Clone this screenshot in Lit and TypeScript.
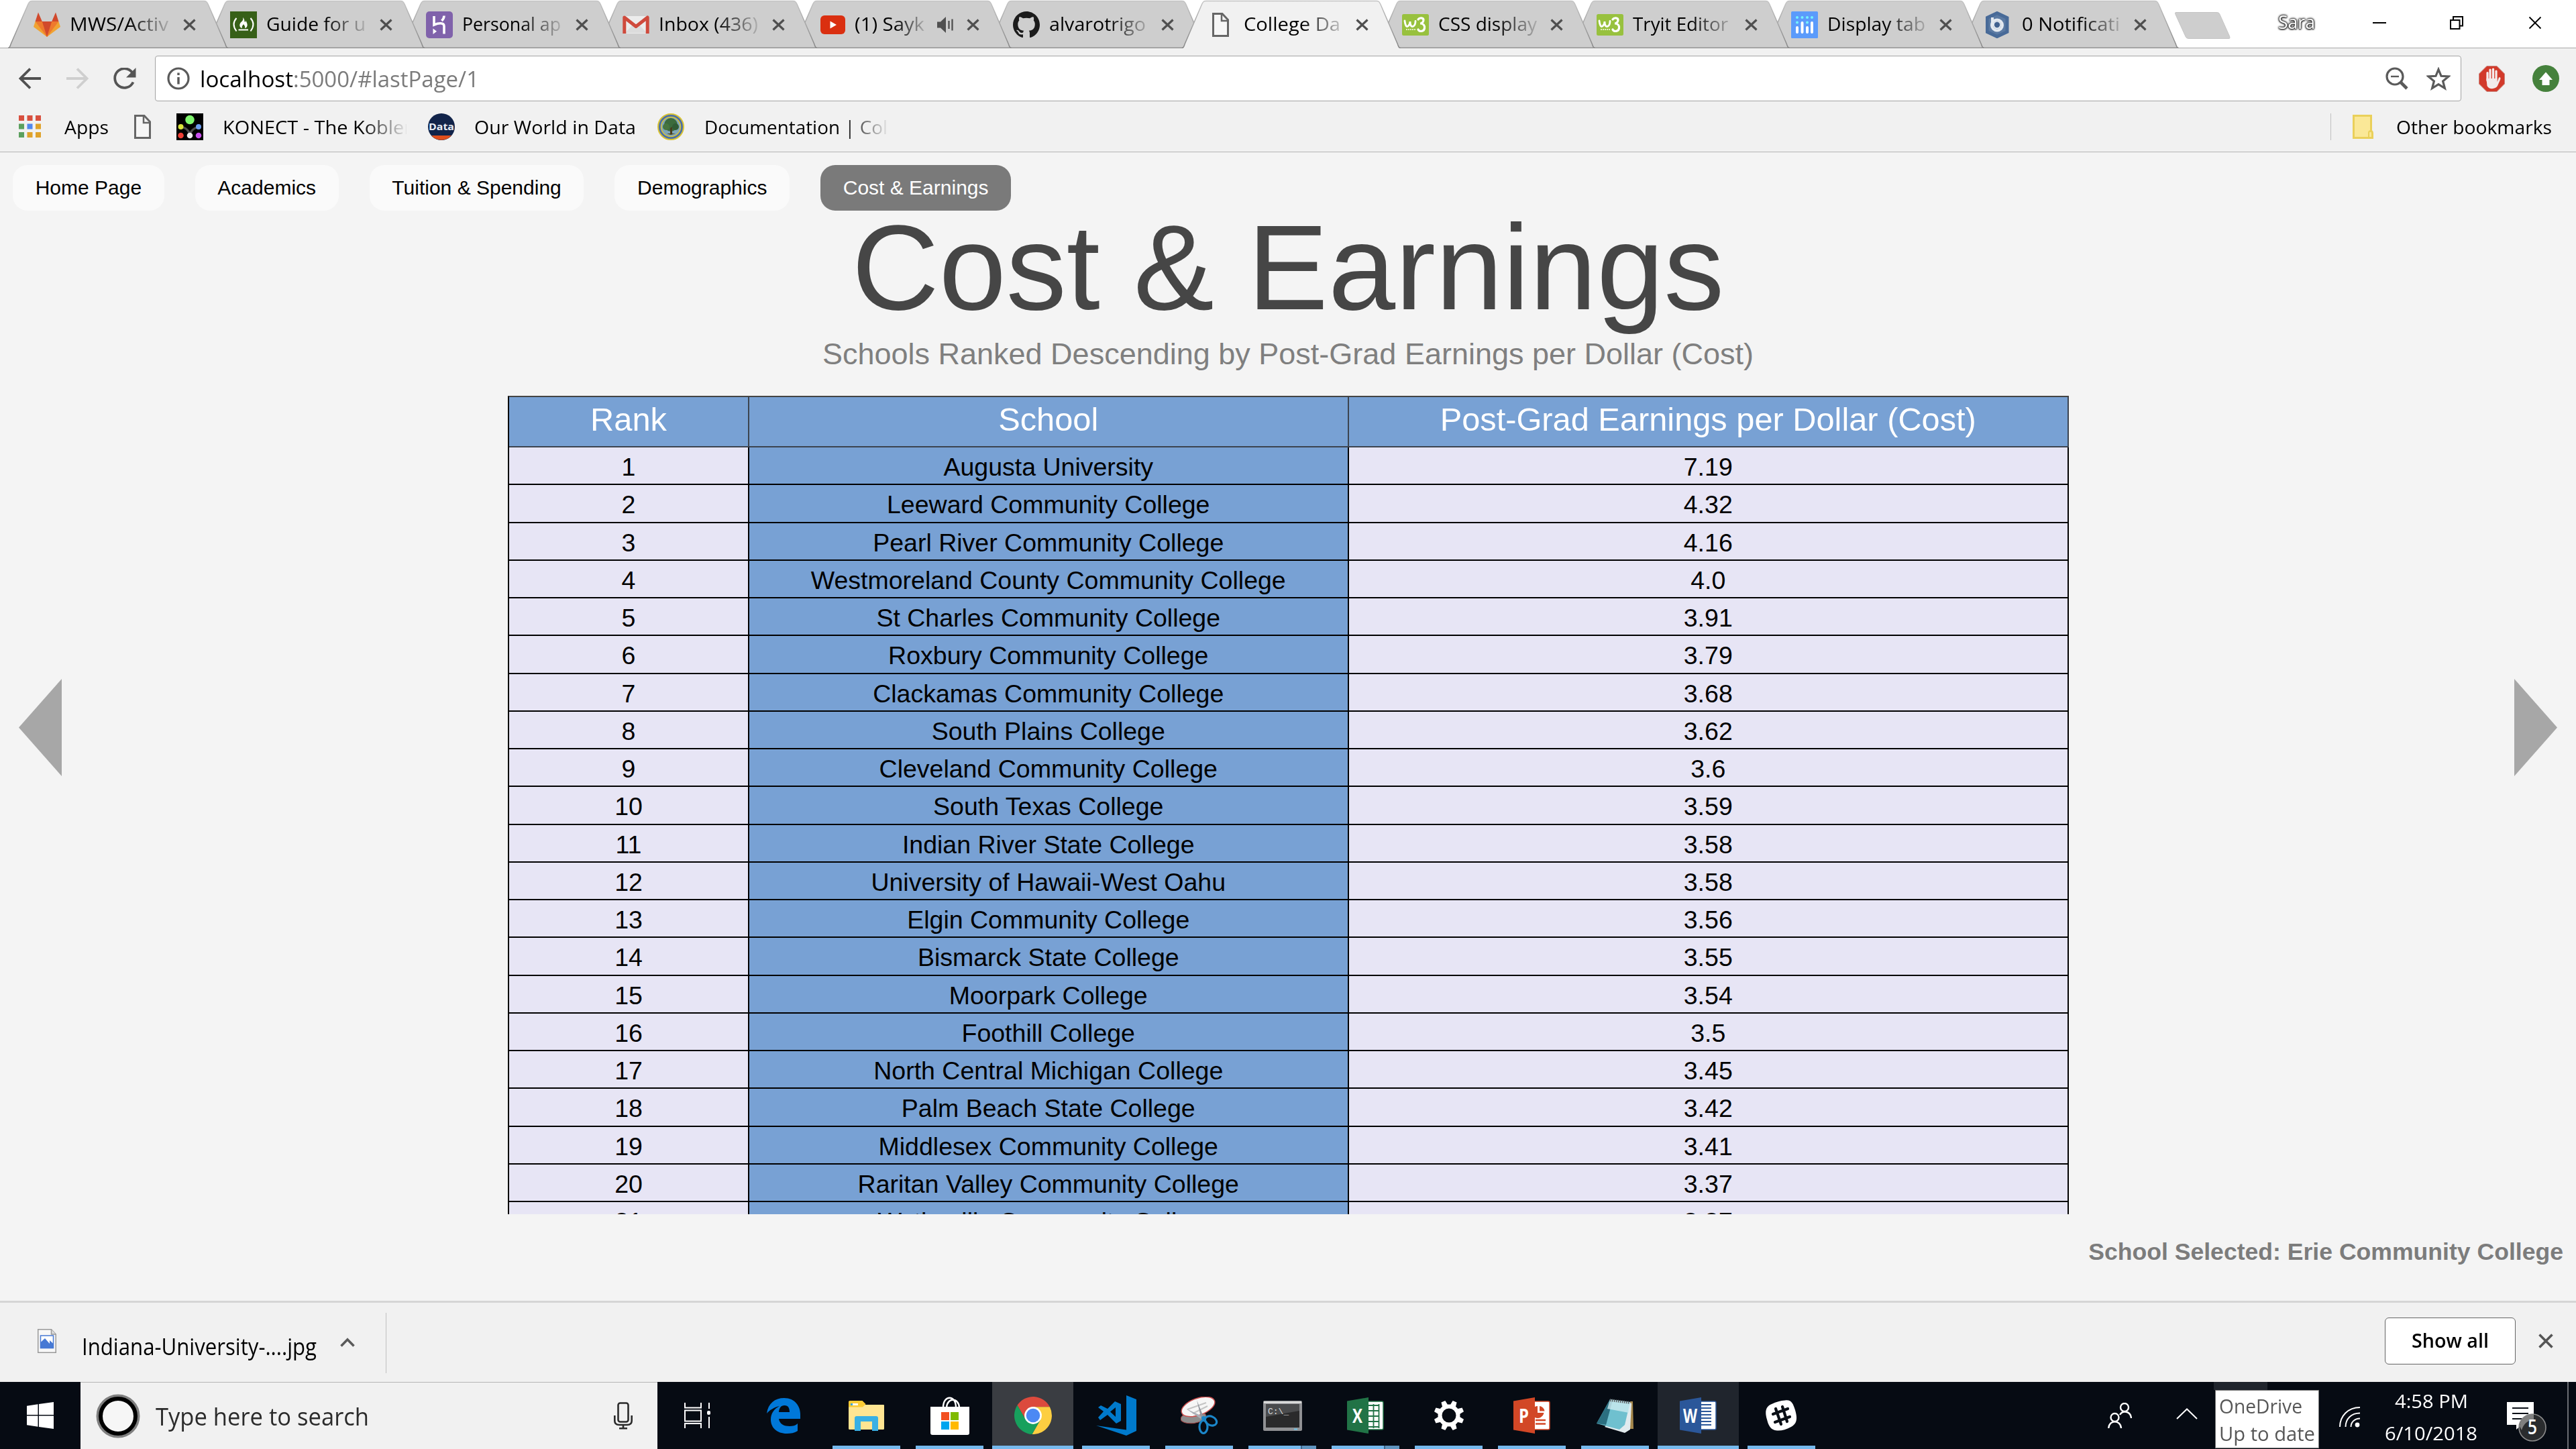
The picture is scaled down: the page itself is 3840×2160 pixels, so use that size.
import { LitElement, html, svg, css, TemplateResult } from "lit";
import { customElement, property } from "lit/decorators.js";
import { classMap } from "lit/directives/class-map.js";
import { styleMap } from "lit/directives/style-map.js";

/** Text set to an exact advance width, condensed or widened as needed. */
@customElement("fit-label")
class FitLabel extends LitElement {
  @property() text = "";
  @property({ type: Number }) w = 100;

  static styles = css`
    :host { display: block; flex: none; overflow: visible; line-height: 1.4; }
    .run { display: inline-block; white-space: pre; transform-origin: 0 50%; }
  `;

  updated() {
    const run = this.renderRoot.querySelector<HTMLElement>(".run")!;
    this.style.width = `${this.w}px`;
    run.style.transform = "none";
    const natural = run.getBoundingClientRect().width;
    if (natural > 0) run.style.transform = `scaleX(${this.w / natural})`;
  }

  render() {
    return html`<span class="run">${this.text}</span>`;
  }
}

const box = (w: number, h: number, body: TemplateResult) =>
  html`<svg width=${w} height=${h} viewBox="0 0 ${w} ${h}" fill="none">${body}</svg>`;

const cross = (w: number, h: number, sw: number, color: string) =>
  box(w, h, svg`<path d="M1.5 1.5L${w - 1.5} ${h - 1.5}M${w - 1.5} 1.5L1.5 ${h - 1.5}" stroke=${color} stroke-width=${sw}/>`);

const pageIcon = box(25, 36, svg`<path d="M1.5 1.5H15L23.5 10.5V34.5H1.5Z" stroke="#666" stroke-width="3" fill="#f6f6f6"/><path d="M14 2V12H24" stroke="#666" stroke-width="2.5"/>`);

const w3Icon = box(40, 40, svg`
  <rect y="4" width="40" height="32" rx="2.5" fill="#98c13e"/>
  <path d="M4 14C5 22 7 23.5 9 22C11 20.500 12 18 12 15C12 21 14 23.500 17 22C19.500 20.500 20 18 20 14.500" stroke="#fff" stroke-width="2.8" stroke-linecap="round"/>
  <path d="M24 12C26 9 32 9 32 13C32 17 28 18 27 18C32 18 34 21 33.500 25C33 30 26 31 24 27" stroke="#fff" stroke-width="3.2" stroke-linecap="round"/>
  <path d="M6 27H20" stroke="#e2f0c2" stroke-width="2" stroke-dasharray="2 1"/>`);

const tabIcons: Record<string, TemplateResult> = {
  gitlab: box(40, 40, svg`
    <path d="M7 1.500L12.800 15H2.600ZM33 1.500L37.400 15H27.200Z" fill="#d1492c"/>
    <path d="M20 38L0 23L2.600 15H37.400L40 23Z" fill="#f0a332"/>
    <path d="M20 38L2.600 15H37.400Z" fill="#ee7a2d"/>
    <path d="M20 38L12.800 15H27.200Z" fill="#d1492c"/>`),
  fcc: box(40, 40, svg`
    <rect width="40" height="40" fill="#376018"/>
    <path d="M9.500 10Q1.500 19 9.500 29.500M30.500 10Q38.500 19 30.500 29.500" stroke="#fff" stroke-width="2"/>
    <path d="M19 9C22 12 21 14 22 16C23.500 15.500 23 14 23 13.500C26.500 18 27 24 22 25C23 22 21 21 20 19C19 21 17 22 18 25C13 24 13.500 18 17 15.500C19 13.500 20 12 19 9Z" fill="#fff"/>
    <path d="M12.500 27.500H27" stroke="#fff" stroke-width="2"/>`),
  heroku: box(40, 40, svg`
    <rect width="40" height="40" rx="5" fill="#8062ab"/>
    <path d="M12 7V20C18 17.500 27 16 27 22V33.500M27 6.500C27 10 25.500 12 23.500 14" stroke="#fff" stroke-width="3.6"/>
    <path d="M10.500 25.500L16 29.800L10.500 34Z" fill="#fff"/>`),
  gmail: box(40, 40, svg`
    <rect x="1" y="7" width="38" height="26" rx="2" fill="#ececec"/>
    <path d="M4 32L16 19L20 22L24 19L36 32Z" fill="#dcdcdc"/>
    <path d="M2.800 33V9L20 22.500L37.200 9V33" stroke="#cf4a3c" stroke-width="5" stroke-linejoin="round"/>`),
  youtube: box(40, 40, svg`
    <rect x="3" y="6" width="37" height="28" rx="6" fill="#da2f10"/>
    <path d="M17.500 14.500L27 20L17.500 25.500Z" fill="#fff"/>`),
  github: html`<svg width="40" height="40" viewBox="0 0 16 16"><path fill="#1b1b1b" d="M8 0C3.580 0 0 3.580 0 8c0 3.540 2.290 6.530 5.470 7.590.4.070.55-.17.55-.38 0-.19-.01-.82-.01-1.490-2.010.37-2.530-.49-2.690-.94-.09-.23-.48-.94-.82-1.130-.28-.15-.68-.52-.01-.53.63-.01 1.080.58 1.230.82.72 1.210 1.870.87 2.330.66.070-.52.28-.87.51-1.070-1.780-.2-3.640-.89-3.640-3.950 0-.87.31-1.590.82-2.150-.08-.2-.36-1.020.08-2.120 0 0 .67-.21 2.200.82.64-.18 1.320-.27 2-.27s1.360.09 2 .27c1.530-1.040 2.200-.82 2.200-.82.44 1.100.16 1.920.08 2.120.51.56.82 1.270.82 2.150 0 3.070-1.870 3.750-3.650 3.950.29.25.54.73.54 1.480 0 1.070-.01 1.930-.01 2.200 0 .21.15.46.55.38A8.010 8.010 0 0 0 16 8c0-4.420-3.580-8-8-8z"/></svg>`,
  page: box(40, 40, svg`<g transform="translate(7 2)"><path d="M1.500 1.500H15L23.500 10.500V34.500H1.500Z" stroke="#666" stroke-width="3" fill="#f6f6f6"/><path d="M14 2V12H24" stroke="#666" stroke-width="2.500"/></g>`),
  w3: w3Icon,
  bars: box(40, 40, svg`
    <rect width="40" height="40" rx="1.500" fill="#5b9bfb"/>
    <path d="M9 9V9.100M16.500 9V9.100M24 9V9.100M31 9V9.100M9 16.500V16.600M24 16.500V16.600" stroke="#74f3fb" stroke-width="4" stroke-linecap="round"/>
    <path d="M9 24V31M16.500 17V31M24 24V31M31 17V31" stroke="#fff" stroke-width="4" stroke-linecap="round"/>`),
  hex: box(40, 40, svg`
    <path d="M17 2.500L32 9.500V30.500L17 37.500L2 30.500V9.500Z" stroke="#486a98" stroke-width="5" fill="#5b7aa3"/>
    <circle cx="17" cy="20.500" r="8" fill="#41618f" stroke="#e3e9f0" stroke-width="4"/><path d="M10 9V21" stroke="#e3e9f0" stroke-width="4"/>
    <circle cx="17" cy="20.500" r="6" fill="#e3e9f0"/><circle cx="17" cy="20" r="4.200" fill="#41618f"/>`),
};

interface Tab { icon: string; text: string; w: number; pitch: number; active?: boolean; sound?: boolean; }
const tabs: Tab[] = [
  { icon: "gitlab", text: "MWS/Activ", w: 147, pitch: 292.5 },
  { icon: "fcc", text: "Guide for u", w: 148, pitch: 292.5 },
  { icon: "heroku", text: "Personal ap", w: 147, pitch: 292.5 },
  { icon: "gmail", text: "Inbox (436)", w: 148, pitch: 292.5 },
  { icon: "youtube", text: "(1) Sayk", w: 104, pitch: 290, sound: true },
  { icon: "github", text: "alvarotrigo", w: 144, pitch: 290 },
  { icon: "page", text: "College Da", w: 144, pitch: 290, active: true },
  { icon: "w3", text: "CSS display", w: 147, pitch: 290 },
  { icon: "w3", text: "Tryit Editor", w: 142, pitch: 290 },
  { icon: "bars", text: "Display tab", w: 146, pitch: 290 },
  { icon: "hex", text: "0 Notificati", w: 146, pitch: 290 },
];

const speaker = box(26, 24, svg`
  <path d="M0 7.500H5L13 0V24L5 16.500H0Z" fill="#505050"/>
  <path d="M17.500 6V18M22.500 3.500V20.500" stroke="#505050" stroke-width="2.300"/>`);

@customElement("tab-strip")
class TabStrip extends LitElement {
  static styles = css`
    :host {
      display: flex; align-items: stretch; height: 72px; padding-left: 12px; box-sizing: border-box;
      background: linear-gradient(#a8a8a8, #a8a8a8) 0 71px / 100% 1px no-repeat #fff;
      font: 28px "Open Sans", "Noto Sans", sans-serif; color: #000;
    }
    svg { display: block; flex: none; }
    .tab { display: flex; align-items: center; box-sizing: border-box; flex: none; position: relative; height: 72px; padding: 0 0 0 38px; margin-right: -35.5px; }
    .shape { position: absolute; left: 0; top: 0; width: 100%; height: 72px; }
    .icon { position: relative; margin-top: 2px; }
    .title { position: relative; margin-left: 14px; width: 149px; overflow: hidden; flex: none; mask-image: linear-gradient(90deg, #000 58%, transparent 106%); }
    .title.short { width: 105px; }
    .sound { position: relative; margin-left: 18px; margin-top: 2px; width: 26px; }
    .close { position: relative; margin-left: auto; margin-right: 48px; margin-top: 2px; }
    .newtab { margin: 18px 0 0 30px; flex: none; }
    .right { margin-left: auto; display: flex; }
    .who { margin: 13px 0 0; color: #fff; text-shadow: 0 0 3px #333, 0 0 3px #333, 0 0 4px #333, 0 0 2px #333, 0 1px 2px #333; }
    .min { margin: 33px 0 0 86px; width: 20px; height: 2px; background: #000; }
    .restore { margin: 24px 0 0 95px; }
    .x { margin: 24px 51px 0 97px; }
  `;

  private tab(t: Tab, i: number) {
    const fill = t.active ? "#f1f1f1" : "#cecece";
    return html`
      <div class="tab" style=${styleMap({ width: `${t.pitch + 35.5}px`, zIndex: `${t.active ? 50 : 20 - i}` })}>
        <svg class="shape" viewBox="0 0 328 72" preserveAspectRatio="none">
          <defs><linearGradient id="edge" x1="0" y1="0" x2="0" y2="1"><stop offset="0" stop-color="#c4c4c4"/><stop offset="1" stop-color="#868686"/></linearGradient></defs>
          <path d="M0 72C3 71 3 69 4 66L30 6C32 2 33 1.500 36 1.500H292C295 1.500 296 2 298 6L324 66C325 69 325 71 328 72Z" fill=${fill}/>
          ${t.active ? "" : svg`<path d="M2 71.300H326" stroke="#959595" stroke-width="1.400"/>`}
          <path d="M0 71.500C3 71 3 69 4 66L30 6C32 2 33 1.500 36 1.500H292C295 1.500 296 2 298 6L324 66C325 69 325 71 328 71.500" fill="none" stroke="url(#edge)" stroke-width="1.500"/>
        </svg>
        <div class="icon">${tabIcons[t.icon]}</div>
        <div class=${classMap({ title: true, short: !!t.sound })}><fit-label .text=${t.text} .w=${t.w}></fit-label></div>
        ${t.sound ? html`<div class="sound">${speaker}</div>` : ""}
        <div class="close">${cross(19, 18, 3.2, "#4f4f4f")}</div>
      </div>`;
  }

  render() {
    return html`
      ${tabs.map((t, i) => this.tab(t, i))}
      <div class="newtab">${box(83, 40, svg`<path d="M2 .5H62C64.500 .5 66 1 67 3.500L81.500 36C82.500 39 82 39.500 80 39.500H21C18.500 39.500 17 38.500 16 36.500L1 3.500C0 1.500 0 .5 2 .5Z" fill="#cecece" stroke="#c4c4c4"/>`)}</div>
      <div class="right">
        <fit-label class="who" .text=${"Sara"} .w=${55}></fit-label>
        <div class="min"></div>
        <div class="restore">${box(20, 20, svg`<path d="M1 6H14.500V19H1ZM5 6V1H19V14.500H15" stroke="#000" stroke-width="2"/>`)}</div>
        <div class="x">${cross(20, 20, 1.8, "#000")}</div>
      </div>`;
  }
}

@customElement("browser-toolbar")
class BrowserToolbar extends LitElement {
  static styles = css`
    :host { display: block; background: #f1f1f1; font: 28px "Open Sans", "Noto Sans", sans-serif; color: #000; border-bottom: 1px solid #b4b4b4; }
    svg { display: block; flex: none; }
    .nav { display: flex; align-items: center; height: 68px; padding: 11px 25px 0 28px; }
    .fwd { margin-left: 38px; }
    .reload { margin-left: 36px; }
    .omni { display: flex; align-items: center; flex: 1; height: 68px; box-sizing: border-box; margin-left: 28px; border: 1px solid #a3a3a3; border-radius: 4px; background: #fff; padding: 0 15px 0 17px; font-size: 33px; }
    .host { margin: 2px 0 0 15px; }
    .path { margin-top: 2px; color: #7b7b7b; }
    .zoom { margin-left: auto; }
    .star { margin-left: 27px; }
    .block { margin-left: 26px; }
    .up { margin-left: 41px; }
    .marks { display: flex; align-items: center; height: 75px; padding: 0 36px 0 28px; }
    .marks fit-label { padding-top: 2px; }
    .apps { margin-left: 35px; }
    .page { margin-left: 38px; }
    .konect { margin-left: 38px; }
    .fade { margin-left: 29px; width: 274px; overflow: hidden; mask-image: linear-gradient(90deg, #000 75%, transparent 101%); flex: none; }
    .data { margin-left: 32px; }
    .world { margin-left: 29px; }
    .seal { margin-left: 32px; }
    .seal + .fade { margin-left: 30px; }
    .sep { margin-left: auto; width: 1px; height: 40px; background: #c0c0c0; }
    .folder { margin-left: 32px; }
    .other { margin-left: 34px; }
    .word { font: 700 15px "Open Sans", sans-serif; }
  `;

  render() {
    const arrow = (c: string, flip: boolean) => box(33, 32, svg`<path transform=${flip ? "translate(33 0) scale(-1 1)" : ""} d="M33 16H3M17 1.500L2.500 16L17 30.500" stroke=${c} stroke-width="3.800"/>`);
    const cells = ["#d8503f", "#d8503f", "#d8503f", "#5ba05e", "#5288ee", "#dfa32c", "#5ba05e", "#dfa32c", "#dfa32c"];
    return html`
      <div class="nav">
        ${arrow("#505050", false)}
        <div class="fwd">${arrow("#cfcfcf", true)}</div>
        <div class="reload">${box(35, 33, svg`<path d="M30.500 9.500A14.300 14.300 0 1 0 30.500 21.500" stroke="#555" stroke-width="3.800"/><path d="M34.500 0V14.500H20Z" fill="#555"/>`)}</div>
        <div class="omni">
          ${box(34, 34, svg`<circle cx="17" cy="17" r="15" stroke="#5a5a5a" stroke-width="3.200"/><path d="M17 15V25.500M17 8.500V12" stroke="#5a5a5a" stroke-width="3.400"/>`)}
          <fit-label class="host" .text=${"localhost"} .w=${139}></fit-label>
          <fit-label class="path" .text=${":5000/#lastPage/1"} .w=${277}></fit-label>
          <div class="zoom">${box(34, 34, svg`<circle cx="14" cy="14" r="12" stroke="#5a5a5a" stroke-width="3.200"/><path d="M22 22L32 32" stroke="#5a5a5a" stroke-width="4.600"/><path d="M8 14H20" stroke="#5a5a5a" stroke-width="2.400"/>`)}</div>
          <div class="star">${box(36, 35, svg`<path d="M18 3.500L22 13.300L33 14L24.600 21L27.400 31.500L18 25.700L8.600 31.500L11.400 21L3 14L14 13.300Z" stroke="#5a5a5a" stroke-width="3.200"/>`)}</div>
        </div>
        <div class="block">${box(39, 39, svg`
          <path d="M12 .5H27L38.500 12V27L27 38.500H12L.5 27V12Z" fill="#d23a2b" stroke="#c9877f"/>
          <path d="M13 22V10.500M17 19V6M21.500 19V5M26 20V8" stroke="#f6eeee" stroke-width="3.200" stroke-linecap="round"/>
          <path d="M11.400 19H27.600V24L30 17.500C32.500 16.500 33 18.500 32 21L28 30C25.500 35 15 36 12.500 30Z" fill="#f2ebeb"/>`)}</div>
        <div class="up">${box(40, 40, svg`<circle cx="20" cy="20" r="20" fill="#45813c"/><path d="M20 10.500L30 22H25.500V30H14.500V22H10Z" fill="#fff"/>`)}</div>
      </div>
      <div class="marks">
        ${box(33, 33, svg`${cells.map((c, i) => svg`<rect x=${(i % 3) * 12.5} y=${Math.floor(i / 3) * 12.5} width="8" height="8" fill=${c}/>`)}`)}
        <fit-label class="apps" .text=${"Apps"} .w=${66}></fit-label>
        <div class="page">${pageIcon}</div>
        <div class="konect">${box(40, 40, svg`
          <rect width="40" height="40" fill="#000"/>
          <path d="M8 20Q20 24 20 34Q20 24 33 20" stroke="#4c4c4c" stroke-width="3"/>
          <circle cx="20" cy="9.500" r="6.800" fill="#7ff56e"/><circle cx="6.500" cy="20" r="4" fill="#d7e339"/><circle cx="33" cy="20" r="4" fill="#6c9cf0"/>
          <circle cx="6.500" cy="33" r="4.300" fill="#ee3f35"/><circle cx="20" cy="33" r="4.300" fill="#f0f0f0"/><circle cx="33" cy="33" r="4.300" fill="#c950ee"/>`)}</div>
        <div class="fade"><fit-label .text=${"KONECT - The Koblen"} .w=${288}></fit-label></div>
        <div class="data">${box(40, 40, svg`
          <circle cx="20" cy="20" r="20" fill="#12244a"/><path d="M5 33H35A20 20 0 0 1 5 33Z" fill="#e04e1c"/>
          <text class="word" x="20" y="25" text-anchor="middle" textLength="38" lengthAdjust="spacingAndGlyphs" fill="#e8edf5">Data</text>`)}</div>
        <fit-label class="world" .text=${"Our World in Data"} .w=${241}></fit-label>
        <div class="seal">${box(40, 40, svg`
          <circle cx="20" cy="20" r="19" fill="#4a6fa8" stroke="#d9c436" stroke-width="2"/>
          <circle cx="20" cy="20" r="14.500" fill="#7fa6b8" stroke="#d9c436" stroke-width="1.500"/>
          <circle cx="20" cy="17" r="10" fill="#3c6b3c"/><circle cx="13" cy="20" r="5" fill="#47763e"/><circle cx="27" cy="20" r="5" fill="#315c35"/>
          <path d="M19 22V30H14L20 32L27 30H22V20" fill="#4a3d1c"/>`)}</div>
        <div class="fade"><fit-label .text=${"Documentation | Col"} .w=${273}></fit-label></div>
        <div class="sep"></div>
        <div class="folder">${box(31, 36, svg`<path d="M1.500 1.500H27.500V24.500C30 24.500 29.500 28 29.500 34.500H1.500Z" fill="#fae897" stroke="#ead05a" stroke-width="3"/><path d="M24 34V27Q24 24 27.500 24" stroke="#ead05a" stroke-width="2"/>`)}</div>
        <fit-label class="other" .text=${"Other bookmarks"} .w=${232}></fit-label>
      </div>`;
  }
}

const navItems = ["Home Page", "Academics", "Tuition & Spending", "Demographics", "Cost & Earnings"];
const rows: [string, string][] = [
  ["Augusta University", "7.19"], ["Leeward Community College", "4.32"], ["Pearl River Community College", "4.16"],
  ["Westmoreland County Community College", "4.0"], ["St Charles Community College", "3.91"], ["Roxbury Community College", "3.79"],
  ["Clackamas Community College", "3.68"], ["South Plains College", "3.62"], ["Cleveland Community College", "3.6"],
  ["South Texas College", "3.59"], ["Indian River State College", "3.58"], ["University of Hawaii-West Oahu", "3.58"],
  ["Elgin Community College", "3.56"], ["Bismarck State College", "3.55"], ["Moorpark College", "3.54"], ["Foothill College", "3.5"],
  ["North Central Michigan College", "3.45"], ["Palm Beach State College", "3.42"], ["Middlesex Community College", "3.41"],
  ["Raritan Valley Community College", "3.37"], ["Wytheville Community College", "3.37"],
];

@customElement("ranking-page")
class RankingPage extends LitElement {
  static styles = css`
    :host { display: flex; flex-direction: column; box-sizing: border-box; height: 1712px; background: #f4f4f4; font-family: "Liberation Sans", Arial, sans-serif; color: #000; overflow: hidden; position: relative; }
    .menu { display: flex; gap: 46px; padding: 19px 0 0 19px; flex: none; }
    .item { height: 68px; line-height: 68px; padding: 0 33.650px; border-radius: 22px; background: #fafafa; font-size: 30px; white-space: nowrap; }
    .item.on { background: #7a7a7a; color: #fff; }
    h1 { margin: -5px 0 0; font-weight: 400; font-size: 180px; line-height: 180px; height: 180px; text-align: center; color: #464646; flex: none; }
    .sub { font-size: 45px; line-height: 60px; text-align: center; color: #7f7f7f; margin-top: 9px; flex: none; white-space: nowrap; }
    .table { margin: 32px auto 0 757px; width: 2327px; height: 1220px; overflow: hidden; flex: none; box-sizing: border-box; border-left: 2px solid #000; border-top: 2px solid #444; }
    .row { display: grid; grid-template-columns: 358px 893.500px 1073.500px; grid-template-rows: 56.250px; height: 56.250px; }
    .cell { box-sizing: border-box; min-height: 0; border-right: 2px solid #000; border-bottom: 2px solid #000; text-align: center; font-size: 37.500px; line-height: 51px; padding-top: 4px; background: #e7e5f5; white-space: nowrap; }
    .blue { background: #78a1d4; }
    .head { height: 75px; grid-template-rows: 75px; }
    .head .cell { background: #78a1d4; color: #fff; font-size: 48.750px; line-height: 67px; padding-top: 0; border-color: #3c4450; }
    .picked { align-self: flex-end; margin: 32px 19px 0 0; font-weight: 700; font-size: 35.600px; line-height: 48px; color: #7c7c7c; white-space: nowrap; }
    .arrow { position: absolute; top: 785px; }
    .prev { left: 28px; }
    .next { right: 28px; }
    .arrow svg { display: block; }
  `;

  render() {
    return html`
      <nav class="menu">${navItems.map((n, i) => html`<span class=${classMap({ item: true, on: i === 4 })}>${n}</span>`)}</nav>
      <h1>Cost &amp; Earnings</h1>
      <div class="sub">Schools Ranked Descending by Post-Grad Earnings per Dollar (Cost)</div>
      <div class="table">
        <div class="row head"><div class="cell">Rank</div><div class="cell">School</div><div class="cell">Post-Grad Earnings per Dollar (Cost)</div></div>
        ${rows.map(([s, v], i) => html`<div class="row"><div class="cell">${i + 1}</div><div class="cell blue">${s}</div><div class="cell">${v}</div></div>`)}
      </div>
      <div class="picked">School Selected: Erie Community College</div>
      <div class="arrow prev">${box(64, 145, svg`<path d="M64 0V145L0 72.500Z" fill="#a7a7a7"/>`)}</div>
      <div class="arrow next">${box(64, 145, svg`<path d="M0 0V145L64 72.500Z" fill="#a7a7a7"/>`)}</div>`;
  }
}

@customElement("download-shelf")
class DownloadShelf extends LitElement {
  static styles = css`
    :host { display: flex; height: 118px; background: #f1f1f1; border-top: 3px solid #d5d5d5; font: 34px "Open Sans", "Noto Sans", sans-serif; color: #000; }
    svg { display: block; flex: none; }
    .file { margin: 39px 0 0 56px; }
    .name { margin: 42px 0 0 38px; }
    .caret { margin: 52px 0 0 35px; }
    .sep { margin: 15px 0 0 46px; width: 1px; height: 90px; background: #c0c0c0; }
    .all { margin: 22px 0 0 auto; width: 195px; height: 70px; box-sizing: border-box; border: 1px solid #666; border-radius: 6px; background: #fff; display: flex; justify-content: center; align-items: center; font-size: 28px; font-weight: 600; }
    .all fit-label { margin-top: -1px; }
    .x { margin: 46px 34px 0 34px; }
  `;

  render() {
    return html`
      <div class="file">${box(28, 36, svg`<path d="M.750 .750H20.500L27.250 8V35.250H.750Z" fill="#f7f7f7" stroke="#999" stroke-width="1.500"/><path d="M20.500 .8V8H27.200" stroke="#999" fill="#ddd" stroke-width="1.500"/><rect x="4.500" y="10" width="19" height="18.500" fill="#fff" stroke="#4779d4" stroke-width="1.500"/><path d="M4.500 20L11 14L18 22V17L23.500 22V28.500H4.500Z" fill="#4779d4"/>`)}</div>
      <fit-label class="name" .text=${"Indiana-University-....jpg"} .w=${350}></fit-label>
      <div class="caret">${box(22, 14, svg`<path d="M1.500 12.500L11 2.800L20.500 12.500" stroke="#5a5a5a" stroke-width="3.600"/>`)}</div>
      <div class="sep"></div>
      <div class="all"><fit-label .text=${"Show all"} .w=${115}></fit-label></div>
      <div class="x">${cross(22, 22, 3.6, "#555")}</div>`;
  }
}

const office = (letter: string, color: string, inner: TemplateResult) => box(55, 54, svg`
  <rect x="28" y="6" width="26" height="42" rx="2" fill="#fff" stroke=${color} stroke-width="1.500"/>
  ${inner}
  <path d="M0 5.500L32 0V54L0 48.500Z" fill=${color}/>
  <text class="glyph" x="15.500" y="37.500" text-anchor="middle" textLength=${letter === "W" ? 21 : 15} lengthAdjust="spacingAndGlyphs" fill="#fff">${letter}</text>`);

interface App { icon: TemplateResult; open?: boolean; stacked?: boolean; state?: "active" | "hover"; }
const apps: App[] = [
  { icon: box(50, 53, svg`<path fill="#0078d9" fill-rule="evenodd" d="M0 23C2 8 12 0 26 0C42 0 50 12 50 25V31H18C19 39 26 42 34 42C39 42 43 41 46 38V49C41 52 36 53 30 53C15 53 6 44 6 32C6 23 11 16 19 12C11 14 4 18 0 23ZM18 21H34C34 15 32 11 26.500 11C21 11 18.500 15 18 21Z"/>`) },
  { open: true, icon: box(53, 45, svg`
    <path d="M0 2Q0 1 1 1H20L25 6H52Q53 6 53 7V41.500Q53 43 51.500 43H1.500Q0 43 0 41.500Z" fill="#ffe592"/>
    <path d="M0 2Q0 0 2 0H20.500L25.500 5L21 9.500H0Z" fill="#fccb34"/><rect x="3" y="4" width="11" height="3" fill="#fff"/><rect x="3" y="4" width="3" height="3" fill="#3ba8dc"/>
    <path d="M9 45V26Q9 23 12 23H41Q44 23 44 26V45H35V31H18V45Z" fill="#38b0e4"/>`) },
  { open: true, icon: box(58, 57, svg`
    <path d="M19 16C19 -3 38 -3 38 16M24 16C25 1 42 1 43 16" stroke="#fff" stroke-width="2.400"/>
    <path d="M0 15H58V54Q58 57 55 57H3Q0 57 0 54Z" fill="#fff"/>
    <rect x="16" y="23" width="12" height="12" fill="#f25022"/><rect x="30" y="23" width="12" height="12" fill="#7fba00"/>
    <rect x="16" y="37" width="12" height="12" fill="#00a4ef"/><rect x="30" y="37" width="12" height="12" fill="#ffb900"/>`) },
  { open: true, state: "active", icon: box(56, 56, svg`
    <path d="M4.500 12.800A28 28 0 0 1 52.900 15.300H28L17 34.300Z" fill="#dc4a3d"/>
    <path d="M52.900 15.300A28 28 0 0 1 26.500 56L39 34.300L28 15.300Z" fill="#fdce41"/>
    <path d="M26.500 56A28 28 0 0 1 4.500 12.800L17 34.300L39 34.300Z" fill="#17a05d"/>
    <circle cx="28" cy="28" r="12.900" fill="#fff"/><circle cx="28" cy="28" r="10.300" fill="#4c89f4"/>`) },
  { open: true, icon: box(60, 60, svg`
    <path d="M45 0L60 6V53L45 60L0 45L45 51.500Z" fill="#007acc"/>
    <path fill-rule="evenodd" d="M28 9L37 13V38L30 42L17 29L6 37L3 33L11 24L3 18L7 15L17 20ZM29 18L21 24.500L29 32Z" fill="#007acc"/>`) },
  { open: true, icon: box(56, 56, svg`
    <ellipse cx="19" cy="31" rx="19" ry="8.500" transform="rotate(-8 19 31)" fill="#8d8d8d" stroke="#a34545"/>
    <ellipse cx="26" cy="15" rx="26" ry="12.500" transform="rotate(-20 26 15)" fill="#f6f6f6" stroke="#cc5050" stroke-width="1.500"/>
    <path d="M10 19L38 9M18 25L40 14" stroke="#c4c4c4" stroke-width="2"/>
    <path d="M8 18L30 33L34 30Z" fill="#a9adb5"/><path d="M24 5L31 34L34 30Z" fill="#92969e"/>
    <ellipse cx="45" cy="36" rx="9" ry="6.500" transform="rotate(25 45 36)" stroke="#1b86c9" stroke-width="3.200"/>
    <ellipse cx="34" cy="45" rx="6" ry="9.500" stroke="#1b86c9" stroke-width="3.200"/><circle cx="34" cy="32" r="3" fill="#1b86c9"/>`) },
  { open: true, stacked: true, icon: box(58, 45, svg`
    <rect width="58" height="45" rx="2" fill="#909194"/><rect x="1" y="1" width="56" height="3" fill="#d9d9d9"/>
    <rect x="4" y="5" width="50" height="35" fill="#2a2a2b"/><path d="M4 5H54V15L4 24Z" fill="#4a4b4d"/><text class="prompt" x="7" y="20" fill="#ddd">C:\\_</text><rect x="46" y="41.500" width="5" height="2" fill="#6ec3e8"/>`) },
  { open: true, stacked: true, icon: office("X", "#217346", svg`<path d="M32 12H47M32 20H47M32 28H47M32 36H47M32 44H47" stroke="#217346" stroke-width="2.200"/><path d="M39.500 10V46M47.500 10V46" stroke="#217346" stroke-width="1.800"/>`) },
  { open: true, icon: box(44, 44, svg`
    <circle cx="22" cy="22" r="13.500" stroke="#fff" stroke-width="6"/>
    ${[22.5, 67.5, 112.5, 157.5, 202.5, 247.5, 292.5, 337.5].map((a) => svg`<path transform="rotate(${a} 22 22)" d="M17.500 8L18.800 -.5H25.200L26.500 8Z" fill="#fff"/>`)}`) },
  { open: true, icon: office("P", "#d24726", svg`<path d="M33 34H48M33 39.500H48" stroke="#d24726" stroke-width="2.500"/><path d="M36 13V23H45.500A9.500 9.500 0 0 1 32 30V14Q34 13 36 13Z" fill="#d24726"/><path d="M39 13A8.500 8.500 0 0 1 46.500 20.500H39Z" fill="#d24726"/>`) },
  { open: true, icon: box(55, 52, svg`
    <path d="M50 5H54L55 46H48Z" fill="#a5884d"/><path d="M48 6L52 8L50 47L42 52L12 43Z" fill="#e2ebee"/>
    <path d="M20 2L50 6L42 40L34 47L0 38Z" fill="#6fc0cf"/><path d="M20 2L24 3L14 40L0 38Z" fill="#2b6f80"/><path d="M20 2L50 6L48 22L16 16Z" fill="#cdebf0" opacity=".8"/>
    <path d="M20 3L50 7" stroke="#5a5d60" stroke-width="4" stroke-dasharray="1.500 1.500"/>`) },
  { open: true, state: "hover", icon: office("W", "#2b579a", svg`<path d="M31 11H47M31 16H47M31 21H47M31 26H47M31 31H47M31 36H47M31 41H47" stroke="#2b579a" stroke-width="2"/>`) },
  { open: true, icon: box(47, 46, svg`
    <path d="M29 .5C38 -1 41 5 44 15C47 25 48 35 38 40C30 44 24 46 17 45.500C7 45 4 37 2 29C-1 19 -1 10 9 6C16 2.500 22 1 29 .5Z" fill="#fff"/>
    <path d="M15 13L23 36M25 10L32 32M11 21L33 13M14 33L36 25" stroke="#0a0f16" stroke-width="4.200" stroke-linecap="round"/>`) },
];

@customElement("task-bar")
class TaskBar extends LitElement {
  static styles = css`
    :host { display: flex; height: 100px; background: #060b13; color: #fff; font: 28px "Open Sans", "Noto Sans", sans-serif; overflow: hidden; }
    svg { display: block; flex: none; }
    .start { width: 120px; display: flex; align-items: center; justify-content: center; }
    .search { width: 860px; box-sizing: border-box; border-top: 1px solid #b6b6b6; background: #f1f1f1; color: #2b2b2b; display: flex; align-items: center; padding: 0 37px 0 23px; font-size: 36px; }
    .search fit-label { margin: 3px 0 0 23px; }
    .mic { margin-left: auto; }
    .view { width: 119px; display: flex; align-items: center; justify-content: center; }
    .apps { display: flex; gap: 3px; margin-left: 8px; }
    .app { width: 121px; height: 100px; display: flex; flex-direction: column; align-items: center; }
    .app.active { background: #3a3d42; }
    .app.hover { background: #20252d; }
    .pic { height: 95px; padding-top: 5px; box-sizing: border-box; display: flex; align-items: center; }
    .line { height: 5px; width: 101px; background: #76b9ed; }
    .active .line, .hover .line { width: 121px; }
    .stacked .line { background: linear-gradient(90deg, #76b9ed 78px, #41678a 78px 80px, #5f94bf 80px); }
    .glyph { font: 700 28px "Open Sans", sans-serif; }
    .prompt { font: 13px "Liberation Mono", monospace; }
    .tray { display: flex; margin-left: auto; }
    .people { margin: 31px 0 0; }
    .up { margin: 39px 0 0 66px; }
    .drive { margin-left: 24px; width: 80px; height: 100px; background: linear-gradient(#20252d, #20252d) 0 0 / 80px 12px no-repeat; }
    .tip { margin: 12px 0 0 2px; width: 155px; height: 87px; box-sizing: border-box; background: #fff; border: 1px solid #767676; color: #575757; font-size: 28.500px; padding: 3px 0 0 5px; }
    .tip fit-label { line-height: 40.500px; }
    .wifi { margin: 37px 0 0 107px; }
    .clock { margin: 5px 0 0 36px; width: 140px; display: flex; flex-direction: column; align-items: center; }
    .clock fit-label { line-height: 47.500px; }
    .note { margin: 30px 0 0 43px; }
    .count { font: 600 30px "Open Sans", sans-serif; }
    .edge { margin-left: 30px; width: 2px; background: #6a6d72; }
    .rest { width: 11px; }
  `;

  render() {
    return html`
      <div class="start">${box(40, 40, svg`<path d="M0 5.700L16.500 3.300V19H0ZM18 3L40 0V19H18ZM0 20.500H16.500V36.700L0 34.300ZM18 20.500H40V40L18 37Z" fill="#fff"/>`)}</div>
      <div class="search">
        ${box(66, 66, svg`<circle cx="33" cy="33" r="30" stroke="#808080" stroke-width="5"/><circle cx="33" cy="33" r="26" stroke="#000" stroke-width="6" fill="#f6f6f6"/>`)}
        <fit-label .text=${"Type here to search"} .w=${318}></fit-label>
        <div class="mic">${box(28, 41, svg`<rect x="6.500" y="1.500" width="15" height="28" rx="3" stroke="#2b2b2b" stroke-width="2.600"/><path d="M1.300 20V28Q1.300 34 8 34H20Q26.700 34 26.700 28V20M14 34V39M8 39.300H20" stroke="#2b2b2b" stroke-width="2.600"/>`)}</div>
      </div>
      <div class="view">${box(39, 38, svg`<path d="M1 0V7.500H25V0M1 38V31H25V38M1 11.500H25V27.500H1Z" stroke="#fff" stroke-width="2"/><path d="M37 0V9M37 21V38" stroke="#fff" stroke-width="2"/><rect x="34" y="12" width="5" height="6" rx="2" fill="#fff"/>`)}</div>
      <div class="apps">
        ${apps.map((a) => html`<div class=${classMap({ app: true, stacked: !!a.stacked, active: a.state === "active", hover: a.state === "hover" })}>
          <div class="pic">${a.icon}</div>${a.open ? html`<div class="line"></div>` : ""}</div>`)}
      </div>
      <div class="tray">
        <div class="people">${box(36, 38, svg`<circle cx="25" cy="7" r="6" stroke="#fff" stroke-width="2.400"/><circle cx="10.500" cy="22" r="6" stroke="#fff" stroke-width="2.400"/><path d="M1.200 38C2 25 19 25 20 38M18 18C22 11 34 12 35 23" stroke="#fff" stroke-width="2.400"/>`)}</div>
        <div class="up">${box(32, 17, svg`<path d="M1 16L16 1.500L31 16" stroke="#fff" stroke-width="2"/>`)}</div>
        <div class="drive"><div class="tip">
          <fit-label .text=${"OneDrive"} .w=${124}></fit-label>
          <fit-label .text=${"Up to date"} .w=${143}></fit-label>
        </div></div>
        <div class="wifi">${box(31, 31, svg`<path d="M1 30C1 14 13 1 31 1M9.500 30C9.500 18 18 9.500 31 9.500M17.500 30C17.500 23 23 17.500 31 17.500" stroke="#fff" stroke-width="2"/><circle cx="27" cy="27" r="3.400" fill="#fff"/>`)}</div>
        <div class="clock">
          <fit-label .text=${"4:58 PM"} .w=${109}></fit-label>
          <fit-label .text=${"6/10/2018"} .w=${138}></fit-label>
        </div>
        <div class="note">${box(60, 60, svg`<path d="M0 0H40V34H22L14 41V34H0Z" fill="#fff"/><path d="M8 9H32M8 17H32M8 25H24" stroke="#0a0f16" stroke-width="2"/><circle cx="38" cy="38" r="20" fill="#2a2c2e" stroke="#8b8b8b" stroke-width="1.600"/><path d="M19 36A20 20 0 0 1 40 18V26Q26 28 22 42Z" fill="#808080"/><text class="count" x="38" y="48" text-anchor="middle" textLength="14" lengthAdjust="spacingAndGlyphs" fill="#fff">5</text>`)}</div>
        <div class="edge"></div><div class="rest"></div>
      </div>`;
  }
}

@customElement("app-root")
class AppRoot extends LitElement {
  static styles = css`
    :host { display: flex; flex-direction: column; width: 3840px; height: 2160px; overflow: hidden; background: #f4f4f4; }
    :host > * { flex: none; }
  `;
  render() {
    return html`
      <tab-strip></tab-strip>
      <browser-toolbar></browser-toolbar>
      <ranking-page></ranking-page>
      <download-shelf></download-shelf>
      <task-bar></task-bar>`;
  }
}
